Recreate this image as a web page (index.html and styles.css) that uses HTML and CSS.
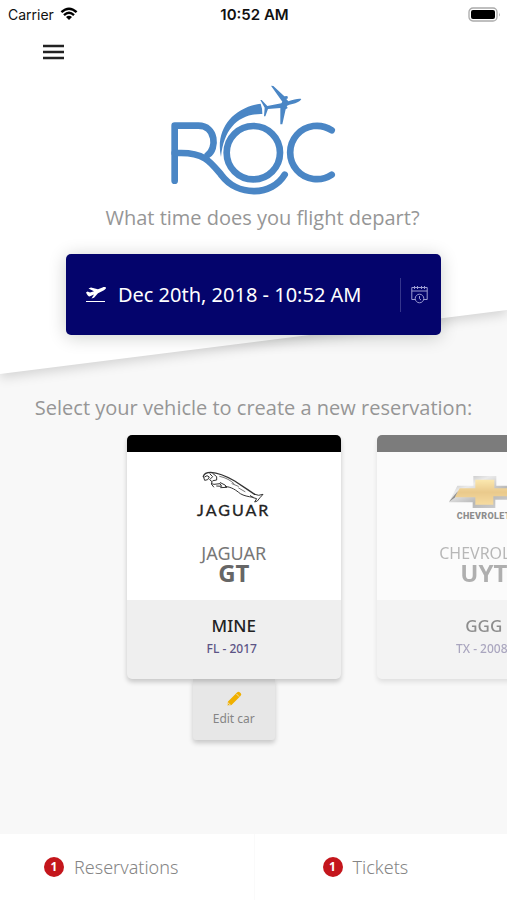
FILE: index.html
```html
<!DOCTYPE html>
<html lang="en">

<head>
    <meta charset="utf-8">
    <meta name="viewport" content="width=device-width,initial-scale=1.0">
    <title>ROC</title>
    <link rel="stylesheet" href="styles.css">
</head>

<body>
    <header class="top">
        <div class="status">
            <span class="carrier">Carrier
                <svg width="18" height="14" viewBox="0 0 18 14" fill="none" stroke="#000" stroke-width="2.4">
                    <path d="M1.4 5.2Q9-1.8 16.6 5.2M4 8.1Q9 3.6 14 8.1" />
                    <path d="M9 13L6 10Q9 7.600 12 10Z" fill="#000" stroke="none" />
                </svg>
            </span>
            <span class="clock">10:52 AM</span>
            <svg class="battery" width="33" height="15" viewBox="0 0 33 15">
                <rect x="1" y="1" width="28" height="13" rx="4" fill="#fff" stroke="#aaa" stroke-width="1.300" />
                <rect x="3" y="3" width="24" height="9" rx="2" />
                <path d="M31 5.500Q32.500 7.500 31 9.500Z" fill="#aaa" />
            </svg>
        </div>
        <button class="menu-btn" aria-label="Menu">
            <svg width="21" height="16" viewBox="0 0 21 16" stroke="#222" stroke-width="2.300">
                <path d="M0 2H21M0 8H21M0 14H21" />
            </svg>
        </button>

        <svg class="logo" width="190" height="125" viewBox="0 0 570 375" fill="none" stroke="#4a86c5" stroke-width="20" stroke-linecap="round" stroke-linejoin="round" role="img" aria-label="ROC">
            <path d="M47 317V152H118C172 152 174 222 146 240" />
            <path d="M47 234H66C138 234 156 263 187 300C237 367 340 362 377 299" />
            <circle cx="283" cy="233" r="80" />
            <path d="M518 166A80 80 0 1 0 518 299" />
            <g fill="#4a86c5" stroke="none">
                <path d="M186 246C168 164 220 98 305 86Q310 99 310 117C240 115 194 160 186 246Z" />
                <path d="M304 75L308 75L325 93L367 85L370 80L336 32L343 33L376 64L385 63L387 70L382 72L388 79C405 73 419 70 427 72C423 80 408 87 391 89L383 93L386 99L380 103L370 148L364 148L364 99L327 102L319 124L315 124L317 98Z" />
            </g>
        </svg>

        <h1 class="heading">What time does you flight depart?</h1>

        <button class="date-btn">
            <svg class="plane" width="20" height="16" viewBox="0 0 20 16" fill="#fff">
                <path d="M0 5.500L1.500 4.500L4 5.500L8 4.300L2.500 1.500L5 .4L12 2.300L16.500 .4C18-.1 20-.2 20 1C20 2 18 3.200 17 3.700L12 6.200L8 10.700L5.500 11.500L8 7.600L3.500 9.400Q2 9.500 0 5.500Z" />
                <path d="M0 14H19V15H0Z" />
            </svg>
            <span class="date">Dec 20th, 2018 - 10:52 AM</span>
            <span class="calendar">
                <svg width="17" height="18" viewBox="0 0 17 18" fill="none" stroke="#9c9cd2">
                    <path d="M4.500 13.500H.8V1.500H16.200V13.500H12.500M.8 5H16.200M3.500 0V3M6.500 0V3M10.500 0V3M13.500 0V3" />
                    <circle cx="8.500" cy="12.500" r="4.300" />
                    <path d="M8.500 10V12.700L10 14" />
                </svg>
            </span>
        </button>
    </header>

    <main class="vehicles">
        <h2 class="heading">Select your vehicle to create a new reservation:</h2>

        <div class="slider">
            <div class="slide">
                <article class="card">
                    <div class="card-info">
                        <svg class="brand" width="80" height="56" viewBox="0 0 240 168">
                            <g fill="none" stroke="#333" stroke-linecap="round" stroke-linejoin="round">
                                <path d="M28 34C30 27 38 22 50 22C75 23 98 34 122 48L161 74L182 88" stroke-width="4" />
                                <path d="M182 88Q194 94 207 88L198 98L190 108L182 111L188 101Q178 100 169 92" stroke-width="3" />
                                <path d="M28 34L32 46L41 44L46 36L39 32L32 36M48 27L56 35L47 44L54 50M56 25L68 35L68 45L57 47" stroke-width="3" />
                                <path d="M54 50L52 57L59 66M53 56L60 58L78 56L83 64L68 63M79 53L93 60L99 67L80 68M94 64C115 67 125 75 139 86C149 92 162 95 178 97" stroke-width="3" />
                                <path d="M77 34C96 38 111 47 120 56M114 56L133 64M134 69L153 80" stroke-width="2" />
                            </g>
                            <text class="jaguar-text" x="119" y="154">JAGUAR</text>
                        </svg>
                        <p class="make">JAGUAR</p>
                        <p class="model">GT</p>
                    </div>
                    <div class="card-owner">
                        <p class="name">MINE</p>
                        <p class="plate">FL - 2017</p>
                    </div>
                </article>
                <button class="edit-btn">
                    <svg width="16" height="16" viewBox="0 0 16 16">
                        <path d="M1 15L2 10.500L11 1.500Q12.500 0 14 1.500L14.800 2.300Q16 3.500 14.500 5L5.500 14Z" fill="#f0b000" />
                        <path d="M10.500 3L13.200 5.700M1 15L2 11.700L4.300 14Z" stroke="#e7e7e7" stroke-width=".8" fill="#f0b000" />
                    </svg>
                    Edit car
                </button>
            </div>

            <div class="slide next">
                <article class="card">
                    <div class="card-info">
                        <svg class="brand" width="80" height="56" viewBox="0 0 240 168">
                            <defs>
                                <linearGradient id="gold" x1="0" y1="0" x2="0" y2="1">
                                    <stop offset="0" stop-color="#ffd967" />
                                    <stop offset=".5" stop-color="#dc9b20" />
                                    <stop offset="1" stop-color="#f4bf48" />
                                </linearGradient>
                                <linearGradient id="chrome" x1="0" y1="0" x2="1" y2="1">
                                    <stop offset="0" stop-color="#555" />
                                    <stop offset=".3" stop-color="#ddd" />
                                    <stop offset=".6" stop-color="#777" />
                                    <stop offset="1" stop-color="#bbb" />
                                </linearGradient>
                            </defs>
                            <path d="M88 33H157V62H224L202 104H154V129H86V112H15L40 62H88Z" fill="url(#chrome)" />
                            <path d="M94 44H151V70H212L197 94H148V119H94V97H32L47 70H94Z" fill="url(#gold)" />
                            <path d="M15 110L42 78L32 98Z" fill="#222" />
                            <text class="chevrolet-text" x="119" y="163">CHEVROLET</text>
                        </svg>
                        <p class="make long">CHEVROLET</p>
                        <p class="model">UYT</p>
                    </div>
                    <div class="card-owner">
                        <p class="name">GGG</p>
                        <p class="plate">TX - 2008</p>
                    </div>
                </article>
            </div>
        </div>
    </main>

    <nav class="tabs">
        <a href="#reservations"><span class="badge">1</span>Reservations</a>
        <a href="#tickets"><span class="badge">1</span>Tickets</a>
    </nav>
</body>

</html>
```
FILE: styles.css
```css
* {
    box-sizing: border-box;
}

body {
    margin: 0;
    min-height: 100vh;
    display: flex;
    flex-direction: column;
    overflow-x: hidden;
    background: #f8f8f8;
    color: #969696;
    font-family: "Noto Sans", "Open Sans", sans-serif;
}

h1, h2, p {
    margin: 0;
}

button {
    border: none;
    padding: 0;
    background: none;
    font-family: inherit;
    cursor: pointer;
}

svg {
    display: block;
    flex-shrink: 0;
}

.top {
    position: relative;
    isolation: isolate;
    display: flex;
    flex-direction: column;
    align-items: center;
    padding-bottom: 39px;
}

/* slanted white background */
.top::before {
    content: "";
    position: absolute;
    inset: 0;
    z-index: -1;
    background: #fff;
    transform: skewY(-7.2deg);
    transform-origin: left bottom;
    box-shadow: 0 4px 12px rgba(0, 0, 0, 0.15);
}

.status {
    width: 100%;
    height: 28px;
    padding: 0 6px 0 8px;
    display: grid;
    grid-template-columns: 1fr auto 1fr;
    align-items: center;
    color: #111;
    font-family: Inter, sans-serif;
    font-size: 14px;
}

.carrier {
    display: flex;
    align-items: center;
    gap: 6px;
}

.clock {
    font-size: 15px;
    font-weight: 600;
}

.battery {
    justify-self: end;
}

.menu-btn {
    align-self: flex-start;
    height: 47px;
    margin-left: 43px;
}

.heading {
    font-family: "Open Sans", "Noto Sans", sans-serif;
    font-size: 20px;
    font-weight: 400;
    line-height: 28px;
    text-align: center;
}

.top .heading {
    margin: 4px 0 22px;
    padding-left: 18px;
}

.date-btn {
    width: 74%;
    height: 81px;
    padding-left: 20px;
    display: flex;
    align-items: center;
    border-radius: 5px;
    background: #04046c;
    color: #fff;
    box-shadow: 0 2px 18px rgba(0, 20, 10, 0.2);
}

.date {
    flex: 1;
    margin-left: 12px;
    font-size: 20px;
    font-weight: 400;
    text-align: left;
    white-space: nowrap;
}

.calendar {
    height: 34px;
    padding: 0 13px 0 10px;
    display: flex;
    align-items: center;
    border-left: 1px solid #35358c;
}

.vehicles {
    padding: 20px 0;
}

.slider {
    display: flex;
    align-items: flex-start;
    gap: 36px;
    margin-top: 13px;
    padding: 0 0 20px 25%;
    overflow: hidden;
}

.slide {
    flex: 0 0 214px;
    display: flex;
    flex-direction: column;
    align-items: center;
}

.slide.next {
    opacity: .5;
}

.card {
    position: relative;
    width: 100%;
    border-top: 17px solid #000;
    border-radius: 5px;
    background: #efefef;
    text-align: center;
    box-shadow: 0 3px 5px rgba(0, 0, 0, 0.2);
}

.card-info {
    padding: 13px 0 16px;
    background: #fff;
}

.brand {
    margin: 0 auto 23px;
}

.jaguar-text,
.chevrolet-text {
    text-anchor: middle;
    fill: #222;
}

.jaguar-text {
    font-family: Lato, sans-serif;
    font-size: 48px;
    font-weight: 400;
    letter-spacing: 6px;
    stroke: #222;
}

.chevrolet-text {
    font-family: Roboto, sans-serif;
    font-size: 27px;
    font-weight: 900;
    letter-spacing: 1px;
}

.make {
    color: #777;
    font-size: 18px;
    line-height: 18px;
}

/* longer names are set smaller */
.make.long {
    font-size: 16px;
}

.model {
    color: #666;
    font-size: 24px;
    font-weight: 700;
    line-height: 22px;
}

.card-owner {
    padding: 14px 0 19px;
}

.name {
    color: #222;
    font-size: 17px;
    font-weight: 500;
    line-height: 24px;
}

.plate {
    padding-right: 4px;
    color: #5c5486;
    font-size: 12px;
    font-weight: 500;
    line-height: 22px;
}

.edit-btn {
    width: 82px;
    height: 61px;
    display: flex;
    flex-direction: column;
    align-items: center;
    justify-content: center;
    gap: 3px;
    padding-bottom: 2px;
    border-radius: 0 0 3px 3px;
    background: #e7e7e7;
    color: #858585;
    font-size: 12px;
    box-shadow: 0 3px 5px rgba(0, 0, 0, 0.2);
}

.tabs {
    margin-top: auto;
    display: flex;
    background: #fff;
}

.tabs a {
    width: 50%;
    height: 66px;
    padding-left: 44px;
    display: flex;
    align-items: center;
    gap: 10px;
    color: #858585;
    font-size: 18px;
    font-weight: 300;
    text-decoration: none;
}

.tabs a + a {
    padding-left: 68px;
    border-left: 1px solid #fafafa;
}

.badge {
    width: 20px;
    height: 20px;
    border-radius: 50%;
    background: #c4161c;
    color: #fff;
    font-size: 12px;
    font-weight: 700;
    line-height: 20px;
    text-align: center;
}
```
